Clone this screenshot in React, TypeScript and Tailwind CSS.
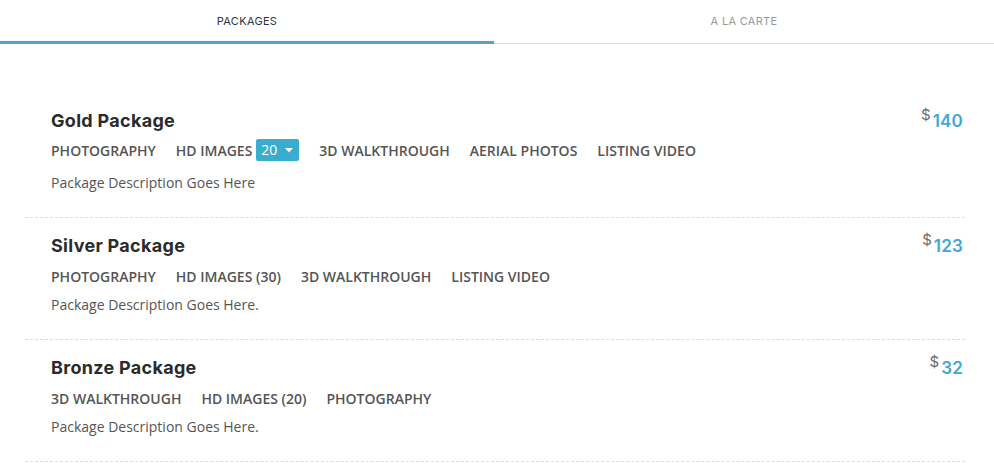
import React from "react";

type Pkg = { name: string; price: string; tags: React.ReactNode[]; desc: string; gold?: boolean };

const Badge = () => (
  <span className="inline-flex items-center justify-between ml-[4px] h-[22px] w-[43px] pl-[5px] pr-[6px] rounded-[2px] bg-[#3aaccf] text-white font-normal text-[14px] leading-none">
    20
    <svg width="8" height="5" viewBox="0 0 8 5"><path d="M0 0 L8 0 L4 4.5 Z" fill="white" /></svg>
  </span>
);

const pkgs: Pkg[] = [
  {
    name: "Gold Package",
    price: "140",
    gold: true,
    tags: [
      "PHOTOGRAPHY",
      <span key="hd" className="inline-flex items-center">HD IMAGES<Badge /></span>,
      "3D WALKTHROUGH",
      "AERIAL PHOTOS",
      "LISTING VIDEO",
    ],
    desc: "Package Description Goes Here",
  },
  {
    name: "Silver Package",
    price: "123",
    tags: ["PHOTOGRAPHY", "HD IMAGES (30)", "3D WALKTHROUGH", "LISTING VIDEO"],
    desc: "Package Description Goes Here.",
  },
  {
    name: "Bronze Package",
    price: "32",
    tags: ["3D WALKTHROUGH", "HD IMAGES (20)", "PHOTOGRAPHY"],
    desc: "Package Description Goes Here.",
  },
];

const mont = { fontFamily: "Inter, 'DejaVu Sans', sans-serif" };

export default function App() {
  return (
    <div className="w-[994px] h-[475px] bg-white overflow-hidden" style={{ fontFamily: "'Open Sans', sans-serif" }}>
      <div className="flex h-[44px]">
        <div className="w-[494px] flex items-center justify-center border-b-[3px] border-[#5c9fc4] text-[11px] text-[#333] tracking-[0.3px] pb-[1px] pt-[3px]" style={mont}>
          PACKAGES
        </div>
        <div className="flex-1 flex items-center justify-center border-b border-[#dcdcdc] text-[11px] text-[#999] tracking-[0.3px] pb-[1px]" style={mont}>
          A LA CARTE
        </div>
      </div>
      <div className="ml-[25px] mr-[29px] pt-[49px]">
        {pkgs.map((p) => (
          <div key={p.name} className="flex justify-between border-b border-dashed border-[#dcdcdc] pl-[26px] pr-[2px] pt-[16px] pb-[24px]">
            <div>
              <div className="text-[18px] leading-[24px] font-bold text-[#2b2b2b] tracking-[0.3px]" style={mont}>{p.name}</div>
              <div className={`flex items-center gap-[20px] ${p.gold ? "mt-[6px]" : "mt-[7px]"} h-[22px] text-[14px] font-semibold text-[#555]`}>
                {p.tags.map((t, i) => (
                  <span key={i}>{t}</span>
                ))}
              </div>
              <div className={`${p.gold ? "mt-[12px]" : "mt-[8px]"} text-[14px] leading-[20px] text-[#555]`}>{p.desc}</div>
            </div>
            <div className="flex items-start pt-[1px]" style={mont}>
              <span className="text-[15px] text-[#6a6a6a] leading-none mr-[2px] -mt-[3px]">$</span>
              <span className="text-[17px] font-semibold text-[#43a6d3] leading-none mt-[3px] tracking-[0.2px]">{p.price}</span>
            </div>
          </div>
        ))}
      </div>
    </div>
  );
}
